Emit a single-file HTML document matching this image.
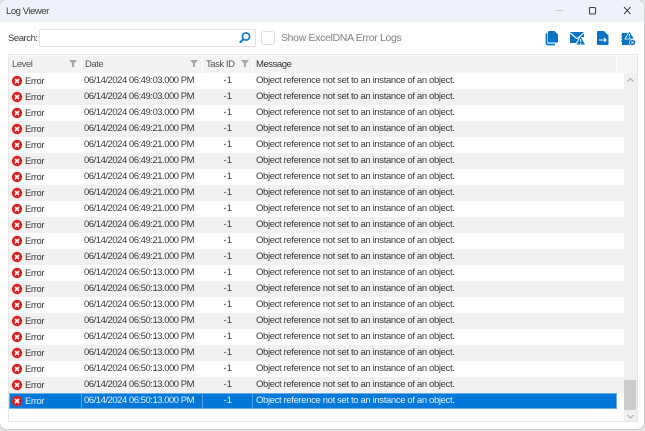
<!DOCTYPE html>
<html><head><meta charset="utf-8">
<style>
html,body{margin:0;padding:0;width:645px;height:431px;overflow:hidden;background:#e4e4e4;font-family:"Liberation Sans",sans-serif;}
.a{position:absolute;white-space:nowrap}
#win{position:absolute;left:0;top:0;width:644px;height:429px;background:#fff;border-radius:7px;box-shadow:0 0 0 1px #cfcfcf;overflow:hidden}
.row{position:absolute;left:9px;width:615px;height:16px;font-size:9.5px;color:#3a3a3a;line-height:15px}
.row.g{background:#f2f1ef}
.row.s{width:608px;top:393px;background:#0078d7;color:#e4f0fb;box-shadow:inset 0 0 0 1px #66b0ea}
.row span{position:absolute;top:0;white-space:nowrap}
.l{left:16px;top:1px!important;line-height:16px;letter-spacing:-.4px}
.d{left:75px;letter-spacing:-.48px}.t{left:187px;width:36px;text-align:right;padding:0}.m{left:247px;letter-spacing:-.36px}
.ic{position:absolute;left:2px;top:2px}
.h{position:absolute;top:56px;height:17px;background:#f3f3f3;font-size:9.5px;line-height:18px;color:#555;box-sizing:border-box;padding-left:3px;border-right:1px solid #fff;letter-spacing:-.45px;white-space:nowrap}
</style></head><body>
<div id="win">
<div class="a" style="left:0;top:0;width:644px;height:22px;background:#eef2f9"></div>
<div class="a" style="left:6px;top:5px;font-size:9.5px;letter-spacing:-.45px;line-height:13px;color:#3a3a3a">Log Viewer</div>
<svg class="a" style="left:550px;top:0" width="94" height="22" fill="none">
<path d="M6 10.5h7" stroke="#c4c8ce" stroke-width="1"/>
<rect x="39.5" y="7.5" width="6" height="6.5" rx="1" stroke="#444" stroke-width="1.1"/>
<path d="M74 7l6.5 7M80.5 7L74 14" stroke="#444" stroke-width="1"/>
</svg>
<div class="a" style="left:8px;top:32px;font-size:9.5px;letter-spacing:-.45px;line-height:13px;color:#3a3a3a">Search:</div>
<div class="a" style="left:39px;top:29px;width:217px;height:18px;box-sizing:border-box;border:1px solid #e2e2e2;border-radius:2px;background:#fff"></div>
<svg class="a" style="left:238px;top:31px" width="14" height="14" fill="none"><circle cx="8" cy="5.5" r="3.6" stroke="#0a74c4" stroke-width="1.6"/><path d="M5.3 8.2L1.8 11.7" stroke="#0a74c4" stroke-width="2"/></svg>
<div class="a" style="left:261px;top:31px;width:14px;height:14px;box-sizing:border-box;border:1px solid #e0e0e0;border-radius:3px;background:#fff"></div>
<div class="a" style="left:281px;top:31px;font-size:10.5px;letter-spacing:-.33px;line-height:14px;color:#808080">Show ExcelDNA Error Logs</div>

<svg class="a" style="left:544px;top:30px" width="16" height="17"><path d="M5 1h5.5L14 4.5V11.5a1 1 0 0 1-1 1H5a1 1 0 0 1-1-1V2a1 1 0 0 1 1-1z" fill="#0a74c4"/><path d="M2.5 3.5V13a1.5 1.5 0 0 0 1.5 1.5h7" stroke="#0a74c4" stroke-width="1.8" fill="none"/></svg>
<svg class="a" style="left:569px;top:30px" width="17" height="17"><path d="M1 2h14L8 8z" fill="#0a74c4"/><path d="M1 3.5V13h6l3-5-2 1.5z" fill="#0a74c4"/><path d="M15 3.5V7l-2 0-1.5-.7z" fill="#0a74c4"/><path d="M11.5 6.5L16 14.5H7.5z" fill="#0a74c4"/><path d="M11.7 9v3M11.7 13v1" stroke="#fff" stroke-width="1"/></svg>
<svg class="a" style="left:596px;top:30px" width="14" height="17"><path d="M2 1h6l4.5 4.5V14a1 1 0 0 1-1 1H2a1 1 0 0 1-1-1V2a1 1 0 0 1 1-1z" fill="#0a74c4"/><path d="M3 10h7M8 8l2 2-2 2" stroke="#fff" stroke-width="1.1" fill="none"/></svg>
<svg class="a" style="left:620px;top:30px" width="17" height="17"><path d="M2 3h9v12H2z" fill="#0a74c4"/><path d="M1 5h2M1 8h2M1 11h2" stroke="#0a74c4" stroke-width="1"/><path d="M9.5 1L14.5 9H5z" fill="#0a74c4" stroke="#fff" stroke-width=".8"/><path d="M9.6 4v2.5M9.6 7.2v1" stroke="#fff" stroke-width="1"/><circle cx="12.5" cy="12.5" r="3.4" fill="#fff"/><circle cx="12.5" cy="12.5" r="2.8" fill="#0a74c4"/><path d="M11.4 11.4l2.2 2.2M13.6 11.4l-2.2 2.2" stroke="#fff" stroke-width=".8"/></svg>

<div class="a" style="left:8px;top:54px;width:630px;height:368px;box-sizing:border-box;border:1px solid #e6e6e6;background:#fff"></div>
<div class="h" style="left:9px;width:73px">Level</div>
<div class="h" style="left:82px;width:121px">Date</div>
<div class="h" style="left:203px;width:50px">Task ID</div>
<div class="h" style="left:253px;width:364px;color:#333">Message</div>
<div class="h" style="left:617px;width:20px;background:#f6f6f6;border:0"></div>
<svg class="a" style="left:68px;top:59px" width="10" height="9"><path d="M1 1h8L6 4.5V8H4V4.5z" fill="#a8a8a8"/></svg>
<svg class="a" style="left:189px;top:59px" width="10" height="9"><path d="M1 1h8L6 4.5V8H4V4.5z" fill="#a8a8a8"/></svg>
<svg class="a" style="left:240px;top:59px" width="10" height="9"><path d="M1 1h8L6 4.5V8H4V4.5z" fill="#a8a8a8"/></svg>

<div class="row" style="top:73px"><svg class="ic" width="12" height="12"><circle cx="6" cy="6" r="5.2" fill="#e0201c"/><path d="M4 4l4 4M8 4l-4 4" stroke="#fff" stroke-width="1.6"/></svg><span class="l">Error</span><span class="d">06/14/2024 06:49:03.000 PM</span><span class="t">-1</span><span class="m">Object reference not set to an instance of an object.</span></div>
<div class="row g" style="top:89px"><svg class="ic" width="12" height="12"><circle cx="6" cy="6" r="5.2" fill="#e0201c"/><path d="M4 4l4 4M8 4l-4 4" stroke="#fff" stroke-width="1.6"/></svg><span class="l">Error</span><span class="d">06/14/2024 06:49:03.000 PM</span><span class="t">-1</span><span class="m">Object reference not set to an instance of an object.</span></div>
<div class="row" style="top:105px"><svg class="ic" width="12" height="12"><circle cx="6" cy="6" r="5.2" fill="#e0201c"/><path d="M4 4l4 4M8 4l-4 4" stroke="#fff" stroke-width="1.6"/></svg><span class="l">Error</span><span class="d">06/14/2024 06:49:03.000 PM</span><span class="t">-1</span><span class="m">Object reference not set to an instance of an object.</span></div>
<div class="row g" style="top:121px"><svg class="ic" width="12" height="12"><circle cx="6" cy="6" r="5.2" fill="#e0201c"/><path d="M4 4l4 4M8 4l-4 4" stroke="#fff" stroke-width="1.6"/></svg><span class="l">Error</span><span class="d">06/14/2024 06:49:21.000 PM</span><span class="t">-1</span><span class="m">Object reference not set to an instance of an object.</span></div>
<div class="row" style="top:137px"><svg class="ic" width="12" height="12"><circle cx="6" cy="6" r="5.2" fill="#e0201c"/><path d="M4 4l4 4M8 4l-4 4" stroke="#fff" stroke-width="1.6"/></svg><span class="l">Error</span><span class="d">06/14/2024 06:49:21.000 PM</span><span class="t">-1</span><span class="m">Object reference not set to an instance of an object.</span></div>
<div class="row g" style="top:153px"><svg class="ic" width="12" height="12"><circle cx="6" cy="6" r="5.2" fill="#e0201c"/><path d="M4 4l4 4M8 4l-4 4" stroke="#fff" stroke-width="1.6"/></svg><span class="l">Error</span><span class="d">06/14/2024 06:49:21.000 PM</span><span class="t">-1</span><span class="m">Object reference not set to an instance of an object.</span></div>
<div class="row" style="top:169px"><svg class="ic" width="12" height="12"><circle cx="6" cy="6" r="5.2" fill="#e0201c"/><path d="M4 4l4 4M8 4l-4 4" stroke="#fff" stroke-width="1.6"/></svg><span class="l">Error</span><span class="d">06/14/2024 06:49:21.000 PM</span><span class="t">-1</span><span class="m">Object reference not set to an instance of an object.</span></div>
<div class="row g" style="top:185px"><svg class="ic" width="12" height="12"><circle cx="6" cy="6" r="5.2" fill="#e0201c"/><path d="M4 4l4 4M8 4l-4 4" stroke="#fff" stroke-width="1.6"/></svg><span class="l">Error</span><span class="d">06/14/2024 06:49:21.000 PM</span><span class="t">-1</span><span class="m">Object reference not set to an instance of an object.</span></div>
<div class="row" style="top:201px"><svg class="ic" width="12" height="12"><circle cx="6" cy="6" r="5.2" fill="#e0201c"/><path d="M4 4l4 4M8 4l-4 4" stroke="#fff" stroke-width="1.6"/></svg><span class="l">Error</span><span class="d">06/14/2024 06:49:21.000 PM</span><span class="t">-1</span><span class="m">Object reference not set to an instance of an object.</span></div>
<div class="row g" style="top:217px"><svg class="ic" width="12" height="12"><circle cx="6" cy="6" r="5.2" fill="#e0201c"/><path d="M4 4l4 4M8 4l-4 4" stroke="#fff" stroke-width="1.6"/></svg><span class="l">Error</span><span class="d">06/14/2024 06:49:21.000 PM</span><span class="t">-1</span><span class="m">Object reference not set to an instance of an object.</span></div>
<div class="row" style="top:233px"><svg class="ic" width="12" height="12"><circle cx="6" cy="6" r="5.2" fill="#e0201c"/><path d="M4 4l4 4M8 4l-4 4" stroke="#fff" stroke-width="1.6"/></svg><span class="l">Error</span><span class="d">06/14/2024 06:49:21.000 PM</span><span class="t">-1</span><span class="m">Object reference not set to an instance of an object.</span></div>
<div class="row g" style="top:249px"><svg class="ic" width="12" height="12"><circle cx="6" cy="6" r="5.2" fill="#e0201c"/><path d="M4 4l4 4M8 4l-4 4" stroke="#fff" stroke-width="1.6"/></svg><span class="l">Error</span><span class="d">06/14/2024 06:49:21.000 PM</span><span class="t">-1</span><span class="m">Object reference not set to an instance of an object.</span></div>
<div class="row" style="top:265px"><svg class="ic" width="12" height="12"><circle cx="6" cy="6" r="5.2" fill="#e0201c"/><path d="M4 4l4 4M8 4l-4 4" stroke="#fff" stroke-width="1.6"/></svg><span class="l">Error</span><span class="d">06/14/2024 06:50:13.000 PM</span><span class="t">-1</span><span class="m">Object reference not set to an instance of an object.</span></div>
<div class="row g" style="top:281px"><svg class="ic" width="12" height="12"><circle cx="6" cy="6" r="5.2" fill="#e0201c"/><path d="M4 4l4 4M8 4l-4 4" stroke="#fff" stroke-width="1.6"/></svg><span class="l">Error</span><span class="d">06/14/2024 06:50:13.000 PM</span><span class="t">-1</span><span class="m">Object reference not set to an instance of an object.</span></div>
<div class="row" style="top:297px"><svg class="ic" width="12" height="12"><circle cx="6" cy="6" r="5.2" fill="#e0201c"/><path d="M4 4l4 4M8 4l-4 4" stroke="#fff" stroke-width="1.6"/></svg><span class="l">Error</span><span class="d">06/14/2024 06:50:13.000 PM</span><span class="t">-1</span><span class="m">Object reference not set to an instance of an object.</span></div>
<div class="row g" style="top:313px"><svg class="ic" width="12" height="12"><circle cx="6" cy="6" r="5.2" fill="#e0201c"/><path d="M4 4l4 4M8 4l-4 4" stroke="#fff" stroke-width="1.6"/></svg><span class="l">Error</span><span class="d">06/14/2024 06:50:13.000 PM</span><span class="t">-1</span><span class="m">Object reference not set to an instance of an object.</span></div>
<div class="row" style="top:329px"><svg class="ic" width="12" height="12"><circle cx="6" cy="6" r="5.2" fill="#e0201c"/><path d="M4 4l4 4M8 4l-4 4" stroke="#fff" stroke-width="1.6"/></svg><span class="l">Error</span><span class="d">06/14/2024 06:50:13.000 PM</span><span class="t">-1</span><span class="m">Object reference not set to an instance of an object.</span></div>
<div class="row g" style="top:345px"><svg class="ic" width="12" height="12"><circle cx="6" cy="6" r="5.2" fill="#e0201c"/><path d="M4 4l4 4M8 4l-4 4" stroke="#fff" stroke-width="1.6"/></svg><span class="l">Error</span><span class="d">06/14/2024 06:50:13.000 PM</span><span class="t">-1</span><span class="m">Object reference not set to an instance of an object.</span></div>
<div class="row" style="top:361px"><svg class="ic" width="12" height="12"><circle cx="6" cy="6" r="5.2" fill="#e0201c"/><path d="M4 4l4 4M8 4l-4 4" stroke="#fff" stroke-width="1.6"/></svg><span class="l">Error</span><span class="d">06/14/2024 06:50:13.000 PM</span><span class="t">-1</span><span class="m">Object reference not set to an instance of an object.</span></div>
<div class="row g" style="top:377px"><svg class="ic" width="12" height="12"><circle cx="6" cy="6" r="5.2" fill="#e0201c"/><path d="M4 4l4 4M8 4l-4 4" stroke="#fff" stroke-width="1.6"/></svg><span class="l">Error</span><span class="d">06/14/2024 06:50:13.000 PM</span><span class="t">-1</span><span class="m">Object reference not set to an instance of an object.</span></div>
<div class="row s"><svg class="ic" width="12" height="12"><circle cx="6" cy="6" r="5.2" fill="#e0201c"/><path d="M4 4l4 4M8 4l-4 4" stroke="#fff" stroke-width="1.6"/></svg><span class="l">Error</span><span class="d">06/14/2024 06:50:13.000 PM</span><span class="t">-1</span><span class="m">Object reference not set to an instance of an object.</span><div class="a" style="left:72px;top:1px;width:1px;height:14px;background:#4aa3e6"></div><div class="a" style="left:193px;top:1px;width:1px;height:14px;background:#4aa3e6"></div><div class="a" style="left:243px;top:1px;width:1px;height:14px;background:#4aa3e6"></div></div>

<div class="a" style="left:624px;top:73px;width:13px;height:348px;background:#f0f0f0"></div>
<div class="a" style="left:624px;top:380px;width:12px;height:30px;background:#cdcdcd"></div>
<svg class="a" style="left:624px;top:73px" width="13" height="348" fill="none"><path d="M3.5 8.5L6.5 5.5L9.5 8.5" stroke="#a6a6a6" stroke-width="1"/><path d="M3.5 342L6.5 345L9.5 342" stroke="#a6a6a6" stroke-width="1"/></svg>
</div>
</body></html>
